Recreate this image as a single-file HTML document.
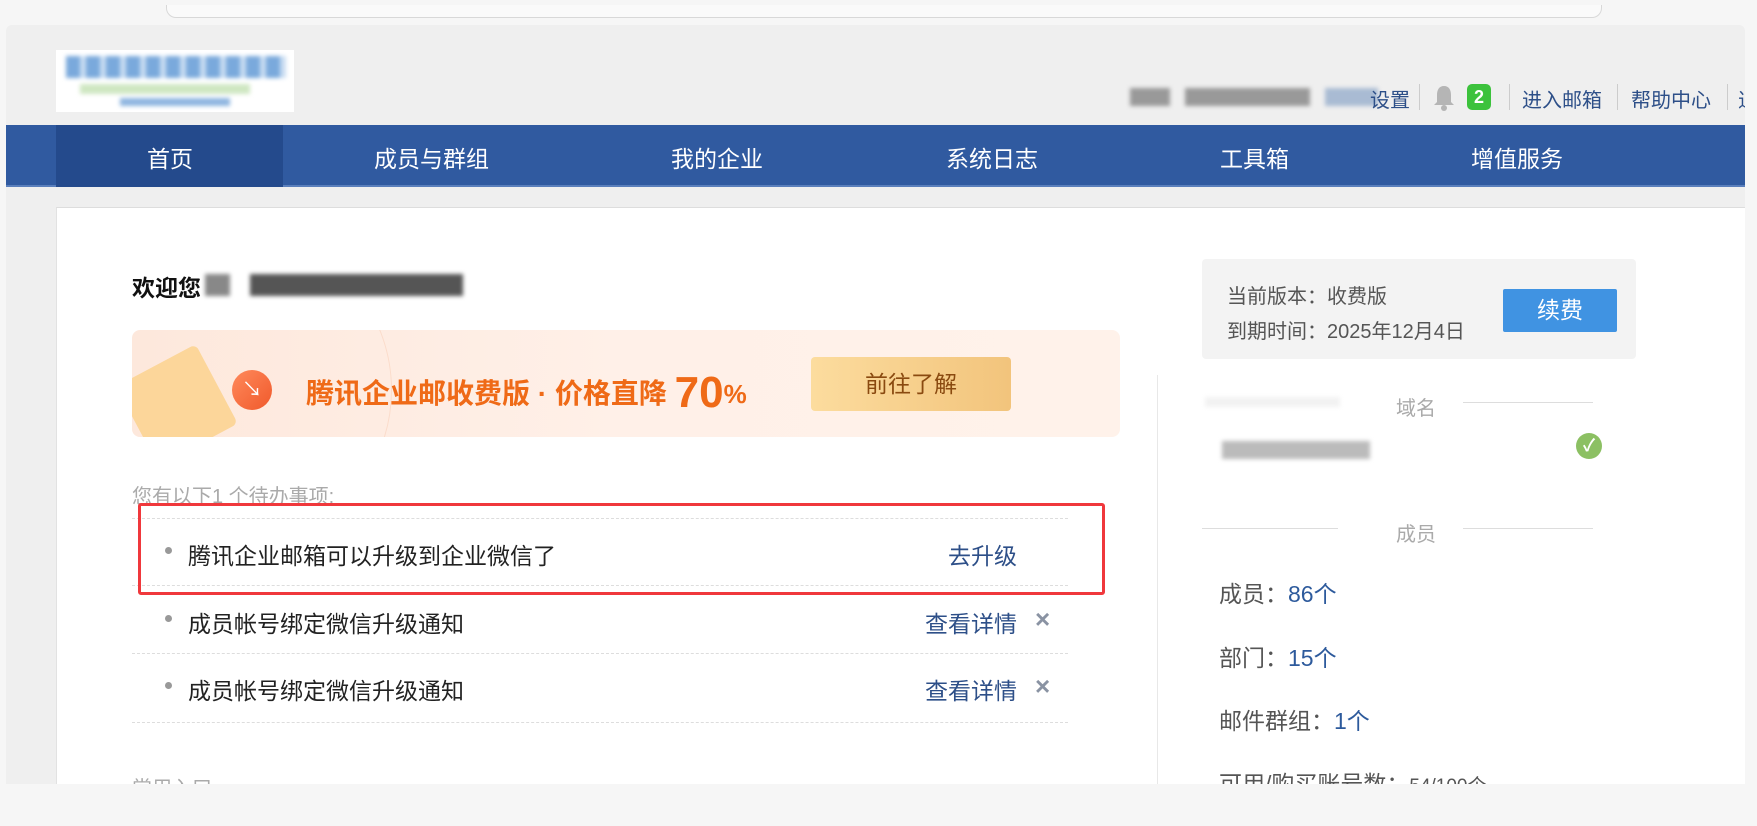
<!DOCTYPE html>
<html><head><meta charset="utf-8"><style>
*{margin:0;padding:0;box-sizing:border-box}
body{width:1757px;height:826px;background:#f6f6f6;position:relative;overflow:hidden;font-family:"Liberation Sans","Noto Sans CJK SC",sans-serif;color:#222}
.a{position:absolute;white-space:nowrap}
.blur{position:absolute;filter:blur(2px)}
</style></head><body>
<div class="a" style="left:166px;top:5px;width:1436px;height:13px;border:1px solid #d8d8d8;border-top:none;border-radius:0 0 10px 10px;background:#fafafa"></div>
<div class="a" style="left:6px;top:25px;width:1739px;height:759px;background:#efefef;border-radius:6px 6px 0 0"></div>
<div class="a" style="left:56px;top:50px;width:238px;height:62px;background:#fff"></div>
<div class="blur" style="left:66px;top:56px;width:220px;height:22px;background:repeating-linear-gradient(90deg,#7aa9dc 0 14px,#c9ddf2 14px 20px)"></div>
<div class="blur" style="left:80px;top:84px;width:170px;height:10px;background:#cfe7c2"></div>
<div class="blur" style="left:120px;top:98px;width:110px;height:8px;background:#8fb6e0"></div>
<div class="blur" style="left:1130px;top:88px;width:248px;height:18px;background:linear-gradient(90deg,#999 0 40px,transparent 40px 55px,#999 55px 180px,transparent 180px 195px,#a9bbd3 195px)"></div>
<div class="a" style="left:1370px;top:84px;font-size:20px;color:#2d4f88">设置</div>
<div class="a" style="left:1419px;top:84px;width:1px;height:26px;background:#ccc"></div>
<svg class="a" style="left:1433px;top:84px" width="22" height="28" viewBox="0 0 22 28"><path d="M11 2c-5 0-7 4-7 9v7l-3 3h20l-3-3v-7c0-5-2-9-7-9z" fill="#b5b5b5"/><circle cx="11" cy="24" r="3" fill="#b5b5b5"/></svg>
<div class="a" style="left:1467px;top:84px;width:24px;height:26px;background:#3cc23c;border-radius:5px;color:#fff;font-size:18px;text-align:center;line-height:26px;font-weight:bold">2</div>
<div class="a" style="left:1509px;top:84px;width:1px;height:26px;background:#ccc"></div>
<div class="a" style="left:1522px;top:84px;font-size:20px;color:#2d4f88">进入邮箱</div>
<div class="a" style="left:1617px;top:84px;width:1px;height:26px;background:#ccc"></div>
<div class="a" style="left:1631px;top:84px;font-size:20px;color:#2d4f88">帮助中心</div>
<div class="a" style="left:1727px;top:84px;width:1px;height:26px;background:#ccc"></div>
<div class="a" style="left:1738px;top:84px;width:7px;overflow:hidden;font-size:20px;color:#2d4f88">退</div>
<div class="a" style="left:6px;top:125px;width:1739px;height:62px;background:#305aa0;border-bottom:2px solid #5a7fbc"></div>
<div class="a" style="left:56px;top:125px;width:227px;height:62px;background:#244a8c"></div>
<div class="a" style="top:140px;left:0;width:1757px;font-size:23px;color:#fff">
<span class="a" style="left:147px">首页</span><span class="a" style="left:374px">成员与群组</span><span class="a" style="left:671px">我的企业</span><span class="a" style="left:946px">系统日志</span><span class="a" style="left:1220px">工具箱</span><span class="a" style="left:1471px">增值服务</span></div>
<div class="a" style="left:56px;top:207px;width:1689px;height:577px;background:#fff;border-top:1px solid #ddd;border-left:1px solid #e2e2e2"></div>
<div class="a" style="left:132px;top:269px;font-size:23px;font-weight:bold;color:#111">欢迎您</div>
<div class="blur" style="left:205px;top:274px;width:258px;height:22px;background:linear-gradient(90deg,#888 0 25px,transparent 25px 45px,#555 45px)"></div>
<div class="a" style="left:132px;top:330px;width:988px;height:107px;background:linear-gradient(90deg,#fde8dc,#fff0e8 50%,#fff2ea);border-radius:8px;overflow:hidden">
<div class="a" style="left:-60px;top:-100px;width:320px;height:320px;border-radius:50%;border:1px solid #fbdccb"></div>
<div class="a" style="left:0;top:30px;width:90px;height:90px;background:#fcd69a;transform:rotate(-28deg);border-radius:6px"></div>
<div class="a" style="left:100px;top:40px;width:40px;height:40px;border-radius:50%;background:linear-gradient(135deg,#ff8a5c,#f0592b);color:#fff;font-size:20px;text-align:center;line-height:40px">↘</div>
<div class="a" style="left:174px;top:34px;font-size:28px;font-weight:bold;color:#ef6a17">腾讯企业邮收费版 · 价格直降 <span style="font-size:44px;position:relative;top:4px">70</span><span style="font-size:26px">%</span></div>
<div class="a" style="left:679px;top:27px;width:200px;height:54px;background:linear-gradient(90deg,#fcdc9e,#f2c47c);border-radius:4px;font-size:23px;color:#8a4a10;text-align:center;line-height:54px">前往了解</div>
</div>
<div class="a" style="left:132px;top:480px;font-size:20px;color:#aaa">您有以下1 个待办事项:</div>
<div class="a" style="left:132px;top:518px;width:936px;border-top:1px dashed #ddd"></div>
<div class="a" style="left:132px;top:585px;width:936px;border-top:1px dashed #ddd"></div>
<div class="a" style="left:132px;top:653px;width:936px;border-top:1px dashed #ddd"></div>
<div class="a" style="left:132px;top:722px;width:936px;border-top:1px dashed #ddd"></div>
<div class="a" style="left:165px;top:547px;width:7px;height:7px;border-radius:50%;background:#999"></div>
<div class="a" style="left:188px;top:537px;font-size:23px;color:#222">腾讯企业邮箱可以升级到企业微信了</div>
<div class="a" style="left:948px;top:537px;font-size:23px;color:#2d4f88">去升级</div>
<div class="a" style="left:165px;top:615px;width:7px;height:7px;border-radius:50%;background:#999"></div>
<div class="a" style="left:188px;top:605px;font-size:23px;color:#222">成员帐号绑定微信升级通知</div>
<div class="a" style="left:925px;top:605px;font-size:23px;color:#2d4f88">查看详情</div>
<div class="a" style="left:1035px;top:604px;font-size:26px;color:#8a93a3;font-weight:bold">×</div>
<div class="a" style="left:165px;top:682px;width:7px;height:7px;border-radius:50%;background:#999"></div>
<div class="a" style="left:188px;top:672px;font-size:23px;color:#222">成员帐号绑定微信升级通知</div>
<div class="a" style="left:925px;top:672px;font-size:23px;color:#2d4f88">查看详情</div>
<div class="a" style="left:1035px;top:671px;font-size:26px;color:#8a93a3;font-weight:bold">×</div>
<div class="a" style="left:138px;top:503px;width:967px;height:92px;border:3px solid #f0383c;border-radius:3px"></div>
<div class="a" style="left:132px;top:772px;font-size:20px;color:#aaa">常用入口</div>
<div class="a" style="left:1157px;top:375px;width:1px;height:409px;background:#e8e8e8"></div>
<div class="a" style="left:1202px;top:259px;width:434px;height:100px;background:#f3f3f3;border-radius:4px"></div>
<div class="a" style="left:1227px;top:280px;font-size:20px;color:#555">当前版本：收费版</div>
<div class="a" style="left:1227px;top:315px;font-size:20px;color:#555">到期时间：2025年12月4日</div>
<div class="a" style="left:1503px;top:289px;width:114px;height:43px;background:#4093e2;border-radius:2px;color:#fff;font-size:23px;text-align:center;line-height:43px">续费</div>
<div class="blur" style="left:1205px;top:397px;width:135px;height:10px;background:#f2f2f2"></div>
<div class="a" style="left:1396px;top:392px;font-size:20px;color:#aaa">域名</div>
<div class="a" style="left:1463px;top:402px;width:130px;height:1px;background:#ddd"></div>
<div class="blur" style="left:1222px;top:441px;width:148px;height:18px;background:#bbb"></div>
<div class="a" style="left:1576px;top:433px;width:26px;height:26px;border-radius:50%;background:#8cc063;color:#fff;font-size:17px;text-align:center;line-height:26px;font-weight:bold">✓</div>
<div class="a" style="left:1202px;top:528px;width:136px;height:1px;background:#ddd"></div>
<div class="a" style="left:1396px;top:518px;font-size:20px;color:#aaa">成员</div>
<div class="a" style="left:1463px;top:528px;width:130px;height:1px;background:#ddd"></div>
<div class="a" style="left:1219px;top:575px;font-size:23px;color:#555">成员：<span style="color:#2d5a9c">86个</span></div>
<div class="a" style="left:1219px;top:639px;font-size:23px;color:#555">部门：<span style="color:#2d5a9c">15个</span></div>
<div class="a" style="left:1219px;top:702px;font-size:23px;color:#555">邮件群组：<span style="color:#2d5a9c">1个</span></div>
<div class="a" style="left:1219px;top:765px;font-size:23px;color:#555">可用/购买账号数：<span style="font-size:19px">54/100个</span></div>
<div class="a" style="left:0;top:784px;width:1757px;height:42px;background:#f6f6f6"></div>
</body></html>
